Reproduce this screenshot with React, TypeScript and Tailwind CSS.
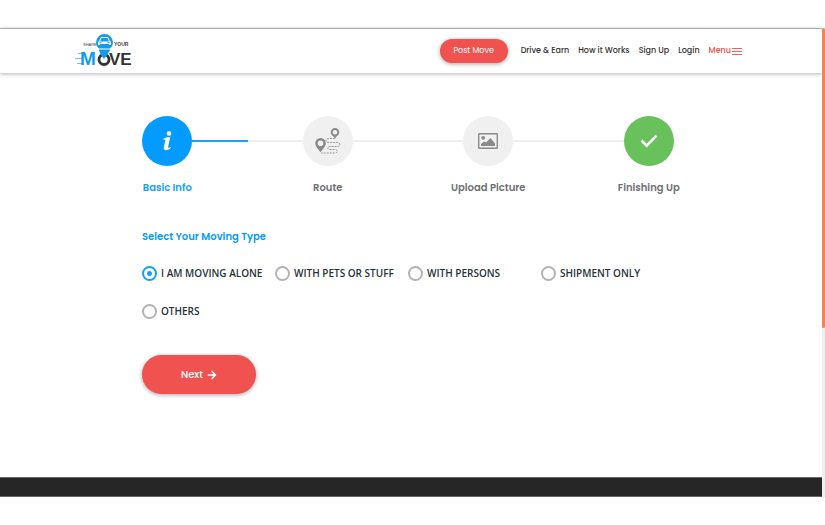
import React, { useState } from 'react';
import { FaArrowRight, FaCheck } from 'react-icons/fa';

const NAV_LINKS = ['Drive & Earn', 'How it Works', 'Sign Up', 'Login'];

const MOVING_TYPES = [
  'I AM MOVING ALONE',
  'WITH PETS OR STUFF',
  'WITH PERSONS',
  'SHIPMENT ONLY',
  'OTHERS',
];

function Logo() {
  return (
    <svg width="58" height="36" viewBox="0 0 58 36" role="img" aria-label="Share Your Move">
      {/* pin with the car */}
      <path d="M29.500 1a8.500 8.500 0 0 0-8.500 8.500c0 2.500 1.200 4.500 3 6h11c1.800-1.500 3-3.500 3-6A8.500 8.500 0 0 0 29.500 1z" fill="#149bf0" />
      <path d="M24.500 8.500l1.600-4h6.800l1.600 4" fill="none" stroke="#fff" strokeWidth="1" />
      <path d="M23 8.500h13v3.500h-2v-1h-9v1h-2z" fill="#fff" />
      <path d="M24.500 9.200h2v1h-2zM32.500 9.200h2v1h-2z" fill="#149bf0" />
      {/* speed lines */}
      <path d="M3 20.500h5M0 25.500h7M2 30.500h5" stroke="#6fc3f7" strokeWidth="1" />
      <g fontFamily="'Liberation Sans', sans-serif" fontWeight="700">
        <text x="8" y="13" fontSize="4" fontWeight="400" fill="#444">SHARE</text>
        <text x="39" y="13" fontSize="5" fontWeight="700" fill="#444">YOUR</text>
        <text x="5" y="32" fontSize="19" fill="#149bf0">M</text>
        <text x="34" y="32" fontSize="17" fill="#333">VE</text>
      </g>
      <circle cx="29" cy="26.500" r="5" fill="#fff" stroke="#333" strokeWidth="2.800" />
      <path d="M23.500 16.500h12L32 22l-3 4-3-4z" fill="#149bf0" />
    </svg>
  );
}

function InfoIcon() {
  return (
    <svg width="12" height="20" viewBox="0 0 12 20" fill="#fff">
      <circle cx="8" cy="2.500" r="2.300" />
      <path d="M2.500 7.500C4 6.600 6 6.300 9.200 6.300L7.200 15.200c-.3 1.400.1 1.800.9 1.600.5-.1.900-.4 1.400-.8l.3.700c-1.300 1.500-2.800 2.500-4.600 2.500-2 0-2.800-1.100-2.400-3L4.300 9.700c.2-1-.1-1.300-1.900-1.300z" />
    </svg>
  );
}

function RouteIcon() {
  return (
    <svg width="26" height="26" viewBox="0 0 26 26" fill="none">
      <path
        d="M20 10.500h-6c-4 0-4 4 0 4h8c4 0 4 4 0 4h-7c-3 0-3 3 0 3h5c3 0 3 3.500 0 3.500H6"
        stroke="#9a9a9a"
        strokeWidth="1"
        strokeDasharray="2 1"
      />
      <path
        fillRule="evenodd"
        d="M20 0a4.300 4.300 0 0 0-4.300 4.300c0 2.500 2.800 3.900 4.300 6.200 1.500-2.300 4.300-3.700 4.300-6.200A4.300 4.300 0 0 0 20 0zm0 1.900a2.300 2.300 0 1 1 0 4.600 2.300 2.300 0 0 1 0-4.600z"
        fill="#8a8a8a"
      />
      <path
        fillRule="evenodd"
        d="M5.500 10A5.300 5.300 0 0 0 .2 15.300c0 3.500 3.300 6 5.300 9 2-3 5.300-5.500 5.300-9A5.300 5.300 0 0 0 5.500 10zm0 2.500a2.800 2.800 0 1 1 0 5.600 2.800 2.800 0 0 1 0-5.600z"
        fill="#8a8a8a"
      />
    </svg>
  );
}

function PictureIcon() {
  return (
    <svg width="20" height="16" viewBox="0 0 20 16" fill="#8a8a8a">
      <rect x=".7" y=".7" width="18.600" height="14.600" rx=".6" fill="none" stroke="#8a8a8a" strokeWidth="1.400" />
      <circle cx="5.200" cy="4.800" r="1.900" />
      <path d="M3 13v-2l3-2.500 2 1L12.500 5l2 2.500 2.500 3V13z" />
    </svg>
  );
}

function CheckIcon() {
  return (
    <svg width="18" height="14" viewBox="0 0 18 14" fill="none" stroke="#fff" strokeWidth="2.600">
      <path d="M1.500 6.500l5.200 5.200L16.500 1.700" />
    </svg>
  );
}

const STEPS = [
  { label: 'Basic Info', icon: <InfoIcon />, circle: 'bg-[#039cfe]', text: 'text-[#189ff5]', before: 'bg-transparent', after: 'bg-[#1f9ff5]' },
  { label: 'Route', icon: <RouteIcon />, circle: 'bg-[#f0f0f0]', text: 'text-[#6f7072]', before: 'bg-[#f0f0f0]', after: 'bg-[#f0f0f0]' },
  { label: 'Upload Picture', icon: <PictureIcon />, circle: 'bg-[#f0f0f0]', text: 'text-[#6f7072]', before: 'bg-[#f0f0f0]', after: 'bg-[#f0f0f0]' },
  { label: 'Finishing Up', icon: <CheckIcon />, circle: 'bg-[#68c15a]', text: 'text-[#6f7072]', before: 'bg-[#f0f0f0]', after: 'bg-transparent' },
];

function Header() {
  return (
    <header className="flex h-[45px] items-center justify-between border-t border-[#a9a9a9] bg-white pl-[75px] pr-20 shadow-[0_1px_4px_rgba(0,0,0,0.3)]">
      <a href="#home"><Logo /></a>
      <nav className="flex items-center gap-[9px] text-[8px] font-medium text-[#333]">
        <button type="button" className="mr-1 h-6 w-[68px] rounded-full bg-[#ef524f] font-normal text-white shadow-[0_1px_4px_rgba(0,0,0,0.35)]">
          Post Move
        </button>
        {NAV_LINKS.map((link) => (
          <a key={link} href="#nav" className="whitespace-nowrap">{link}</a>
        ))}
        <button type="button" className="flex items-center gap-px text-[#f0504d]">
          Menu
          <svg width="10" height="9" viewBox="0 0 10 9" stroke="#f0605d">
            <path d="M0 1.500h10M0 4.500h10M0 7.500h10" />
          </svg>
        </button>
      </nav>
    </header>
  );
}

function App() {
  const [movingType, setMovingType] = useState(MOVING_TYPES[0]);

  return (
    <div className="min-h-screen bg-white py-7 font-['Poppins','Inter',sans-serif]">
      <div className="flex">
        <div className="min-w-0 flex-1">
          <Header />

          <main className="mx-auto max-w-[648px] pb-[83px] pr-[6px] pt-[43px]">
            {/* Progress steps */}
            <ol className="grid grid-cols-4">
              {STEPS.map((step) => (
                <li key={step.label}>
                  <div className="flex items-center">
                    <span className={`h-[2px] flex-1 ${step.before}`} />
                    <span className={`flex size-[50px] items-center justify-center rounded-full ${step.circle}`}>
                      {step.icon}
                    </span>
                    <span className={`h-[2px] flex-1 ${step.after}`} />
                  </div>
                  <p className={`mt-[14px] text-center text-[10px] font-semibold leading-4 ${step.text}`}>{step.label}</p>
                </li>
              ))}
            </ol>

            {/* Moving type */}
            <form className="mt-[33px] px-[55px]" onSubmit={(e) => e.preventDefault()}>
              <fieldset>
                <legend className="text-[10px] font-semibold leading-4 text-[#039cfe]">Select Your Moving Type</legend>
                <div className="mt-5 grid grid-cols-4 gap-y-[22px] font-['Open_Sans',sans-serif]">
                  {MOVING_TYPES.map((type) => (
                    <label key={type} className="flex items-center gap-1 whitespace-nowrap text-[10px] font-semibold leading-4 text-[#263238]">
                      <input
                        type="radio"
                        name="moving-type"
                        value={type}
                        checked={movingType === type}
                        onChange={() => setMovingType(type)}
                        className="size-[15px] shrink-0 appearance-none rounded-full border-2 border-[#b3b3b3] checked:border-[#189ff5] checked:bg-[radial-gradient(circle,#189ff5_0_2px,transparent_3px)]"
                      />
                      {type}
                    </label>
                  ))}
                </div>
              </fieldset>

              <button
                type="submit"
                className="mt-9 flex h-[39px] w-[114px] items-center justify-center gap-1 rounded-full bg-[#ef524f] text-[10px] font-medium text-white shadow-[0_1px_4px_rgba(0,0,0,0.35)]"
              >
                Next
                <FaArrowRight size={10} />
              </button>
            </form>
          </main>

          <footer className="h-5 border-y border-[#666] bg-[#262626]" />
        </div>

        {/* Scroll track */}
        <div className="flex w-[3px] flex-col bg-[#efefef]">
          <div className="h-[64%] rounded-sm bg-[#f0825c]" />
        </div>
      </div>
    </div>
  );
}

export default App;
